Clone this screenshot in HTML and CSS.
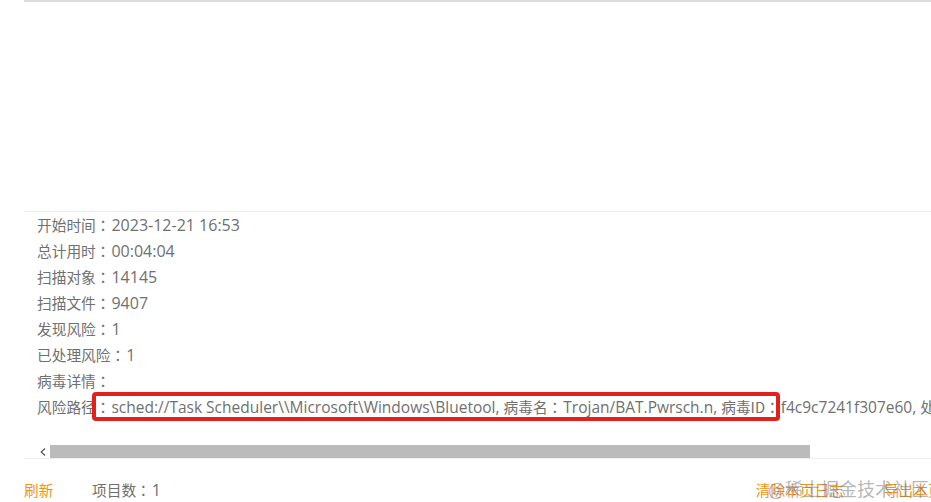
FILE: index.html
```html
<!DOCTYPE html>
<html lang="zh-CN">
<head>
<meta charset="utf-8">
<title>扫描日志</title>
<link rel="stylesheet" href="styles.css">
</head>
<body>
<div class="page">
  <div class="top-rule"></div>
  <div class="blank"></div>
  <div class="details">
    <div class="line"><span class="k">开始时间<span class="colon" lang="zh-TW">：</span></span><span class="v">2023-12-21 16:53</span></div>
    <div class="line"><span class="k">总计用时<span class="colon" lang="zh-TW">：</span></span><span class="v">00:04:04</span></div>
    <div class="line"><span class="k">扫描对象<span class="colon" lang="zh-TW">：</span></span><span class="v">14145</span></div>
    <div class="line"><span class="k">扫描文件<span class="colon" lang="zh-TW">：</span></span><span class="v">9407</span></div>
    <div class="line"><span class="k">发现风险<span class="colon" lang="zh-TW">：</span></span><span class="v">1</span></div>
    <div class="line"><span class="k">已处理风险<span class="colon" lang="zh-TW">：</span></span><span class="v">1</span></div>
    <div class="line"><span class="k">病毒详情<span class="colon" lang="zh-TW">：</span></span></div>
    <div class="line path"><span class="k">风险路径<span class="colon" lang="zh-TW">：</span></span><span class="v">sched://Task Scheduler\\Microsoft\Windows\Bluetool, </span><span class="k">病毒名<span class="colon" lang="zh-TW">：</span></span><span class="v">Trojan/BAT.Pwrsch.n, </span><span class="k">病毒ID<span class="colon" lang="zh-TW">：</span></span><span class="v">f4c9c7241f307e60, </span><span class="k">处理结果<span class="colon" lang="zh-TW">：</span>已处理</span></div>
  </div>
  <div class="hscroll">
    <div class="arrow">
      <svg width="6" height="8" viewBox="0 0 6 8"><path d="M5 0.5 L1.2 4 L5 7.5" fill="none" stroke="#555" stroke-width="1.2"/></svg>
    </div>
    <div class="thumb"></div>
  </div>
  <div class="footer">
    <span class="link refresh">刷新</span>
    <span class="count">项目数<span class="colon" lang="zh-TW">：</span><span class="v">1</span></span>
    <span class="spacer"></span>
    <span class="link clear">清除本页日志</span>
    <span class="link export">导出本页日志</span>
  </div>
  <div class="annot"></div>
  <div class="watermark">@稀土掘金技术社区</div>
</div>
</body>
</html>
```
FILE: styles.css
```css
html, body {
  margin: 0;
  padding: 0;
  background: #fff;
}
body {
  font-family: "Noto Sans CJK SC", sans-serif;
  font-size: 14.7px;
  color: #707070;
}
.page {
  position: relative;
  width: 931px;
  height: 502px;
  overflow: hidden;
  padding-left: 24px;
  box-sizing: border-box;
}
.top-rule {
  height: 2px;
  background: #dcdcdc;
}
.blank {
  height: 209px;
}
.details {
  border-top: 1px solid #ebebeb;
  padding-left: 13px;
  white-space: nowrap;
}
.line {
  height: 26px;
  line-height: 26px;
}
.k {
  font-family: "Noto Sans CJK SC", sans-serif;
  font-size: 14.7px;
}
.colon {
  font-family: "Noto Sans CJK TC", sans-serif;
}
.v {
  font-family: "Open Sans", "Noto Sans CJK SC", sans-serif;
  font-size: 16px;
  padding-left: 1px;
}
.path .v {
  font-size: 15.5px;
}
.hscroll {
  margin-top: 25px;
  height: 13px;
  display: flex;
  border-bottom: 1px solid #eeeeee;
}
.arrow {
  width: 26px;
  display: flex;
  align-items: center;
  justify-content: flex-end;
  padding-right: 4px;
  box-sizing: border-box;
}
.thumb {
  width: 760px;
  height: 13px;
  background: #bbbbbb;
}
.footer {
  display: flex;
  align-items: center;
  padding-top: 21px;
  line-height: 20px;
  white-space: nowrap;
}
.link {
  color: #f29418;
}
.refresh {
  width: 68px;
}
.spacer {
  flex: 1;
}
.clear {
  margin-right: 40px;
}
.export {
  margin-right: -41px;
}
.annot {
  position: absolute;
  left: 92px;
  top: 392px;
  width: 688px;
  height: 29px;
  border: 4px solid #e4201c;
  border-radius: 4px;
  box-sizing: border-box;
}
.watermark {
  position: absolute;
  left: 768px;
  top: 476px;
  font-size: 18px;
  line-height: 24px;
  white-space: nowrap;
  color: rgba(120, 120, 120, 0.55);
  font-family: "Noto Sans CJK SC", sans-serif;
  font-weight: 400;
}
```
